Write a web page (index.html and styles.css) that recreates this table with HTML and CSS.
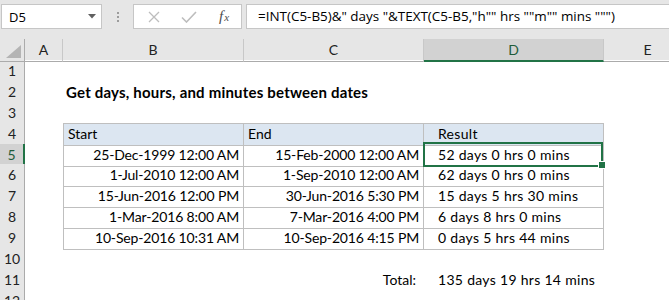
FILE: index.html
```html
<!DOCTYPE html>
<html lang="en">
<head>
    <meta charset="UTF-8">
    <title>Get days, hours, and minutes between dates</title>
    <link rel="stylesheet" href="styles.css">
</head>
<body>
<div class="app">
    <!-- Formula bar -->
    <div class="formula-bar">
        <div class="name-box">
            <span>D5</span>
            <svg class="caret" width="8" height="5" viewBox="0 0 8 5"><path d="M0 0h8L4 4.5z" fill="#606060"/></svg>
        </div>
        <div class="grip"><i></i><i></i><i></i></div>
        <div class="fx-box">
            <svg width="12" height="12" viewBox="0 0 12 12"><path d="M1 1l10 10M11 1L1 11" stroke="#bdbdbd" stroke-width="1.3" fill="none"/></svg>
            <svg width="16" height="12" viewBox="0 0 16 12"><path d="M1 6.5l4.5 4.5L15 1" stroke="#bdbdbd" stroke-width="1.6" fill="none"/></svg>
            <span class="fx">f<sub>x</sub></span>
        </div>
        <div class="formula">=INT(C5-B5)&amp;" days "&amp;TEXT(C5-B5,"h"" hrs ""m"" mins """)</div>
    </div>

    <!-- Sheet -->
    <div class="sheet">
        <div class="row head">
            <div class="corner"><span></span></div>
            <div class="col">A</div>
            <div class="col">B</div>
            <div class="col">C</div>
            <div class="col active">D</div>
            <div class="col">E</div>
            <div class="col"></div>
        </div>
        <div class="row">
            <div class="rh">1</div><div></div><div></div><div></div><div></div><div></div><div></div>
        </div>
        <div class="row">
            <div class="rh">2</div><div></div><div class="cell title">Get days, hours, and minutes between dates</div><div></div><div></div><div></div><div></div>
        </div>
        <div class="row">
            <div class="rh">3</div><div></div><div></div><div></div><div></div><div></div><div></div>
        </div>
        <div class="row">
            <div class="rh">4</div><div></div>
            <div class="cell t th first">Start</div>
            <div class="cell t th">End</div>
            <div class="cell t th res">Result</div>
            <div></div><div></div>
        </div>
        <div class="row">
            <div class="rh active">5</div><div></div>
            <div class="cell t num first">25-Dec-1999 12:00 AM</div>
            <div class="cell t num">15-Feb-2000 12:00 AM</div>
            <div class="cell t res selected">52 days 0 hrs 0 mins</div>
            <div></div><div></div>
        </div>
        <div class="row">
            <div class="rh">6</div><div></div>
            <div class="cell t num first">1-Jul-2010 12:00 AM</div>
            <div class="cell t num">1-Sep-2010 12:00 AM</div>
            <div class="cell t res">62 days 0 hrs 0 mins</div>
            <div></div><div></div>
        </div>
        <div class="row">
            <div class="rh">7</div><div></div>
            <div class="cell t num first">15-Jun-2016 12:00 PM</div>
            <div class="cell t num">30-Jun-2016 5:30 PM</div>
            <div class="cell t res">15 days 5 hrs 30 mins</div>
            <div></div><div></div>
        </div>
        <div class="row">
            <div class="rh">8</div><div></div>
            <div class="cell t num first">1-Mar-2016 8:00 AM</div>
            <div class="cell t num">7-Mar-2016 4:00 PM</div>
            <div class="cell t res">6 days 8 hrs 0 mins</div>
            <div></div><div></div>
        </div>
        <div class="row">
            <div class="rh">9</div><div></div>
            <div class="cell t num first">10-Sep-2016 10:31 AM</div>
            <div class="cell t num">10-Sep-2016 4:15 PM</div>
            <div class="cell t res">0 days 5 hrs 44 mins</div>
            <div></div><div></div>
        </div>
        <div class="row">
            <div class="rh">10</div><div></div><div></div><div></div><div></div><div></div><div></div>
        </div>
        <div class="row">
            <div class="rh">11</div><div></div><div></div>
            <div class="cell num total-label">Total:</div>
            <div class="cell res">135 days 19 hrs 14 mins</div>
            <div></div><div></div>
        </div>
        <div class="row">
            <div class="rh">12</div><div></div><div></div><div></div><div></div><div></div><div></div>
        </div>
    </div>
</div>
</body>
</html>
```

FILE: styles.css
```css
* {
    margin: 0;
    padding: 0;
    box-sizing: border-box;
}
body {
    width: 669px;
    height: 300px;
    overflow: hidden;
    background: #fff;
    font-family: 'Lato', sans-serif;
    color: #000;
}

/* Formula bar */
.formula-bar {
    height: 40px;
    background: #e6e6e6;
    display: flex;
    align-items: flex-start;
    padding: 4px 0 0 1px;
    border-bottom: 1px solid #d4d4d4;
}
.name-box {
    width: 101px;
    height: 25px;
    background: #fff;
    border: 1px solid #c6c6c6;
    display: flex;
    align-items: center;
    justify-content: space-between;
    padding: 0 5px 0 7px;
    font-family: 'Open Sans', sans-serif;
    font-size: 13px;
}
.grip {
    width: 31px;
    height: 25px;
    display: flex;
    flex-direction: column;
    align-items: center;
    justify-content: center;
    gap: 2px;
}
.grip i {
    width: 2px;
    height: 2px;
    background: #9c9c9c;
}
.fx-box {
    width: 109px;
    height: 25px;
    background: #fff;
    border: 1px solid #c6c6c6;
    display: flex;
    align-items: center;
    padding-left: 14px;
    gap: 21px;
}
.fx {
    font-family: 'Liberation Serif', serif;
    font-style: italic;
    font-size: 15px;
    color: #4d4d4d;
    margin-left: 1px;
}
.fx sub {
    font-size: 11px;
    vertical-align: 0;
    margin-left: 1px;
}
.formula {
    flex: 1;
    margin-left: 4px;
    height: 25px;
    background: #fff;
    border: 1px solid #c6c6c6;
    border-right: none;
    padding-left: 11px;
    font-family: 'Open Sans', sans-serif;
    font-size: 13.45px;
    line-height: 23px;
    white-space: nowrap;
}

/* Sheet */
.row {
    display: grid;
    grid-template-columns: 25px 38px 181px 180px 180px 88px 1fr;
    height: 20.9px;
}
.row.head {
    height: 21px;
    margin-top: -1px;
    background: #e6e6e6;
}
.col {
    border-right: 1px solid #c8c8c8;
    border-bottom: 1px solid #ababab;
    text-align: center;
    font-size: 14px;
    line-height: 21px;
    color: #222;
}
.col.active {
    background: #d2d2d2;
    border-bottom: 2px solid #217346;
    color: #1f5c3a;
}
.corner {
    position: relative;
    border-right: 1px solid #ababab;
    border-bottom: 1px solid #ababab;
}
.corner span {
    position: absolute;
    right: 3px;
    bottom: 3px;
    width: 0;
    height: 0;
    border-left: 15px solid transparent;
    border-bottom: 13px solid #b4b4b4;
}
.rh {
    background: #e6e6e6;
    border-right: 1px solid #ababab;
    border-bottom: 1px solid #cfcfcf;
    text-align: center;
    font-size: 14px;
    line-height: 22px;
    color: #222;
}
.rh.active {
    background: #d2d2d2;
    border-right: 2px solid #217346;
    color: #1f5c3a;
}

/* Cells */
.cell {
    font-size: 14px;
    line-height: 22px;
    white-space: nowrap;
    padding: 0 4px;
}
.title {
    font-weight: 700;
    font-size: 15px;
    letter-spacing: 0.2px;
    padding-left: 3px;
}
.t {
    border-right: 1px solid #bfbfbf;
    border-bottom: 1px solid #bfbfbf;
}
.t.first {
    border-left: 1px solid #bfbfbf;
}
.th {
    background: #dce6f1;
    border-top: 1px solid #bfbfbf;
    line-height: 20px;
}
.num {
    text-align: right;
    letter-spacing: -0.15px;
}
.res {
    padding-left: 14px;
    letter-spacing: 0.3px;
}
.total-label {
    padding-right: 8px;
    letter-spacing: 0;
}
.selected {
    position: relative;
}
.selected::after {
    content: '';
    position: absolute;
    top: -2px;
    left: -1px;
    right: 0;
    bottom: -1px;
    border: 2px solid #217346;
}
.selected::before {
    content: '';
    position: absolute;
    right: -3px;
    bottom: -3px;
    width: 6px;
    height: 6px;
    background: #217346;
    border: 1px solid #fff;
    z-index: 1;
}
```
